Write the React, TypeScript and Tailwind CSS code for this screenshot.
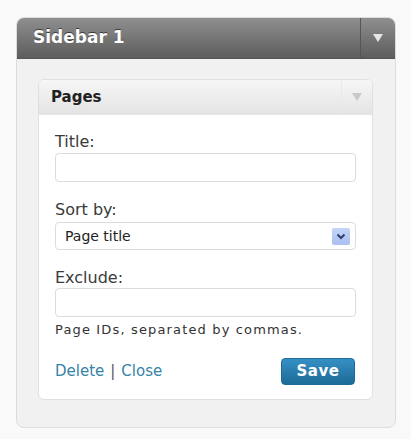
import React from "react";

export default function App() {
  const font = { fontFamily: '"DejaVu Sans", Verdana, sans-serif' };
  return (
    <div className="w-[411px] h-[439px] bg-[#f9f9f9] pt-[17px] pl-[16px]" style={font}>
      <div className="w-[380px] h-[411px] rounded-[8px] border border-[#dcdcdc] bg-[#f1f1f1] flex flex-col overflow-hidden">
        {/* Outer header */}
        <div className="h-[41px] shrink-0 flex items-stretch bg-gradient-to-b from-[#8f8f8f] to-[#5d5d5d] border-b border-[#555]">
          <div className="flex-1 flex items-center pl-[16px] text-white font-bold text-[17px] [text-shadow:0_-1px_0_#3a3a3a]">
            Sidebar 1
          </div>
          <div className="w-[35px] border-l border-[#555] flex items-center justify-center">
            <svg width="12" height="10" viewBox="0 0 12 10">
              <path d="M1 1 L11 1 L6 9 Z" fill="#e6e6e6" />
            </svg>
          </div>
        </div>
        {/* Outer body */}
        <div className="pt-[20px] pl-[21px] pr-[22px]">
          <div className="rounded-[6px] border border-[#e0e0e0] bg-white overflow-hidden">
            <div className="h-[35px] flex items-stretch bg-gradient-to-b from-[#f6f6f6] to-[#e4e4e4] border-b border-[#e6e6e6]">
              <div className="flex-1 flex items-center pl-[12px] text-[#222] font-bold text-[15px]">Pages</div>
              <div className="w-[31px] border-l border-[#e9e9e9] flex items-center justify-center">
                <svg width="12" height="10" viewBox="0 0 12 10">
                  <path d="M1 1 L11 1 L6 9 Z" fill="#c9c9c9" />
                </svg>
              </div>
            </div>
            <div className="pt-[17px] pb-[14px] pl-[16px] pr-[16px] text-[#3a3a3a]">
              <div className="text-[16px] leading-[20px]">Title:</div>
              <div className="mt-[1px] h-[29px] rounded-[4px] border border-[#dcdcdc] bg-white" />
              <div className="mt-[18px] text-[16px] leading-[20px]">Sort by:</div>
              <div className="mt-[2px] h-[28px] rounded-[4px] border border-[#dcdcdc] bg-white flex items-center pl-[9px] pr-[5px]">
                <span className="flex-1 text-[14px] text-[#222]">Page title</span>
                <span className="w-[18px] h-[17px] rounded-[2px] bg-gradient-to-b from-[#c5d5f7] to-[#a9bff0] flex items-center justify-center">
                  <svg width="10" height="7" viewBox="0 0 10 7">
                    <path d="M1.5 1.5 L5 5 L8.5 1.5" stroke="#2c3f6e" strokeWidth="2" fill="none" />
                  </svg>
                </span>
              </div>
              <div className="mt-[18px] text-[16px] leading-[20px]">Exclude:</div>
              <div className="h-[29px] rounded-[4px] border border-[#dcdcdc] bg-white" />
              <div className="mt-[3px] text-[13px] leading-[20px] tracking-[1.15px] text-[#333]">Page IDs, separated by commas.</div>
              <div className="mt-[18px] flex items-center justify-between">
                <div className="text-[15px] text-[#3683a8]">
                  <span>Delete</span>
                  <span className="text-[#555] mx-[6px]">|</span>
                  <span>Close</span>
                </div>
                <div className="w-[74px] h-[27px] mr-[1px] rounded-[4px] bg-gradient-to-b from-[#3590c4] to-[#1d6a98] border border-[#1f6a96] flex items-center justify-center text-white font-bold text-[15px] tracking-[0.5px]">
                  Save
                </div>
              </div>
            </div>
          </div>
        </div>
      </div>
    </div>
  );
}
